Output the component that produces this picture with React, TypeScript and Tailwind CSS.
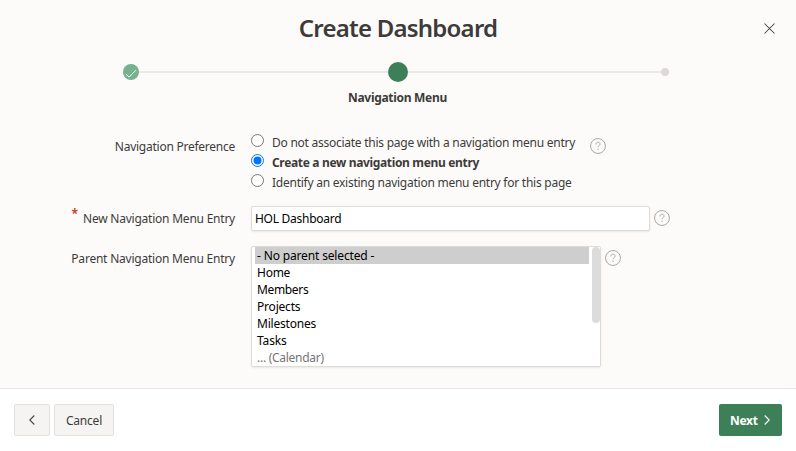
import React from "react";

function Help() {
  return (
    <svg className="block h-4 w-4 shrink-0" viewBox="0 0 16 16" fill="none" stroke="#aaa8a5">
      <circle cx="8" cy="8" r="7.45" strokeWidth="1" />
      <path d="M5.9 6.4C5.9 5 6.8 4.2 8 4.2S10.1 5 10.1 6.2C10.1 7.7 8 7.7 8 9.4" strokeWidth="0.95" />
      <path d="M8 10.8v1.1" strokeWidth="1.1" />
    </svg>
  );
}

function Radio({ checked }: { checked?: boolean }) {
  return (
    <svg className="mt-px block h-[13px] w-[13px] shrink-0" viewBox="0 0 13 13">
      <circle cx="6.5" cy="6.5" r="6" fill="#fff" stroke={checked ? "#0075ff" : "#767676"} strokeWidth="1" />
      {checked && <circle cx="6.5" cy="6.5" r="4" fill="#0075ff" />}
    </svg>
  );
}

const parents: { name: string; className: string }[] = [
  { name: "Home", className: "tracking-[-0.25px]" },
  { name: "Members", className: "tracking-[-0.35px]" },
  { name: "Projects", className: "tracking-[-0.2px]" },
  { name: "Milestones", className: "tracking-[-0.2px]" },
  { name: "Tasks", className: "tracking-[-0.15px]" },
  { name: "... (Calendar)", className: "tracking-[-0.27px] text-[#757575]" },
];

export default function App() {
  return (
    <div className="flex h-[451px] w-[796px] flex-col overflow-hidden whitespace-nowrap bg-[#fcfbfa] font-['Noto_Sans','Open_Sans',sans-serif] text-xs text-[#3d3b39]">
      <header className="grid h-[56px] shrink-0 grid-cols-[1fr_auto_1fr] items-center">
        <h1 className="col-start-2 text-2xl font-semibold tracking-[-0.77px]"><span>Create Dashboard</span></h1>
        <button className="mr-[21px] justify-self-end" aria-label="Close">
          <svg className="block h-[11px] w-[11px]" viewBox="0 0 11 11" fill="none" stroke="#45423f" strokeWidth="1.05">
            <path d="M.5.5l10 10M10.5.5l-10 10" />
          </svg>
        </button>
      </header>

      <div className="flex h-8 shrink-0 items-center pl-[123px] pr-[127px]">
        <span className="flex h-4 w-4 shrink-0 items-center justify-center rounded-full bg-[#77b28f]">
          <svg className="block h-4 w-4" viewBox="0 0 16 16" fill="none" stroke="#fff" strokeWidth="0.9">
            <path d="M3 10.1l3.1 3L13 6.1" />
          </svg>
        </span>
        <span className="h-0.5 flex-1 bg-[#ebe9e7]" />
        <span className="h-5 w-5 shrink-0 rounded-full bg-[#3d8058]" />
        <span className="h-0.5 w-[253px] bg-[#ebe9e7]" />
        <span className="h-2 w-2 shrink-0 rounded-full bg-[#dddad6]" />
      </div>
      <div className="flex h-5 shrink-0 items-center justify-center pr-px font-bold"><span className="tracking-[-0.3px]">Navigation Menu</span></div>

      <main className="flex h-[280px] shrink-0 flex-col pt-[25px]">
        <div className="flex h-[73px] shrink-0">
          <div className="mr-4 mt-1 w-[235px] shrink-0 text-right leading-5"><span className="tracking-[-0.25px]">Navigation Preference</span></div>
          <div className="flex w-[325px] flex-col">
            <label className="flex h-5 gap-2"><Radio /><span className="leading-5 tracking-[-0.255px]">Do not associate this page with a navigation menu entry</span></label>
            <label className="flex h-5 gap-2 font-bold"><Radio checked /><span className="leading-5 tracking-[-0.34px]">Create a new navigation menu entry</span></label>
            <label className="flex h-5 gap-2"><Radio /><span className="leading-5 tracking-[-0.25px]">Identify an existing navigation menu entry for this page</span></label>
          </div>
          <div className="ml-[14px] mt-[5px]"><Help /></div>
        </div>

        <div className="flex h-10 shrink-0">
          <div className="mr-4 flex w-[235px] shrink-0 justify-end gap-[5px] leading-[26px]">
            <span className="text-xs font-bold leading-[15px] text-[#c74634]">*</span>
            <span className="tracking-[-0.23px]">New Navigation Menu Entry</span>
          </div>
          <div className="flex h-[25px] w-[399px] items-center rounded-[2px] border border-[#dfdcd8] bg-white pl-[3px] text-black shadow-[0_1px_2px_rgba(0,0,0,0.08)]"><span className="tracking-[-0.27px]">HOL Dashboard</span></div>
          <div className="ml-1 mt-1"><Help /></div>
        </div>

        <div className="flex">
          <div className="mr-4 w-[235px] shrink-0 text-right leading-[26px]"><span className="tracking-[-0.22px]">Parent Navigation Menu Entry</span></div>
          <div className="flex h-[121px] w-[350px] justify-between overflow-hidden rounded-[2px] border border-[#dfdcd8] bg-white pl-[3px] text-black shadow-[0_1px_2px_rgba(0,0,0,0.08)]">
            <div className="w-[334px]">
              <div className="h-[17px] bg-[#cecece] pl-0.5 leading-[17px]"><span className="tracking-[-0.15px]">- No parent selected -</span></div>
              {parents.map((p) => (
                <div key={p.name} className="h-[17px] pl-0.5 leading-[17px]"><span className={p.className}>{p.name}</span></div>
              ))}
            </div>
            <div className="h-[76px] w-2 rounded-full bg-[#dcdcdc]" />
          </div>
          <div className="ml-1 mt-1"><Help /></div>
        </div>
      </main>

      <footer className="flex flex-1 items-start border-t border-[#e8e6e4] bg-white pl-[14px] pr-[14px] pt-[15px]">
        <button className="flex h-8 w-9 items-center justify-center rounded-[2px] border border-[#e4e1dd] bg-[#f6f4f2]" aria-label="Back">
          <svg className="mr-px block h-[10px] w-[6px]" viewBox="0 0 6 10" fill="none" stroke="#4a4744" strokeWidth="1.1"><path d="M5.3.5L.8 5l4.5 4.5" /></svg>
        </button>
        <button className="ml-1 flex h-8 w-[60px] items-center justify-center rounded-[2px] border border-[#e4e1dd] bg-[#f6f4f2] pt-0.5"><span className="tracking-[-0.2px]">Cancel</span></button>
        <button className="ml-auto flex h-8 w-[63px] items-center rounded-[2px] bg-[#3d8058] pl-[11px] text-left font-bold text-white">
          <span className="w-[34px] pt-0.5 tracking-[-0.3px]">Next</span>
          <svg className="block h-[10px] w-[6px]" viewBox="0 0 6 10" fill="none" stroke="#fff" strokeWidth="1.1"><path d="M.7.5L5.2 5 .7 9.5" /></svg>
        </button>
      </footer>
    </div>
  );
}
